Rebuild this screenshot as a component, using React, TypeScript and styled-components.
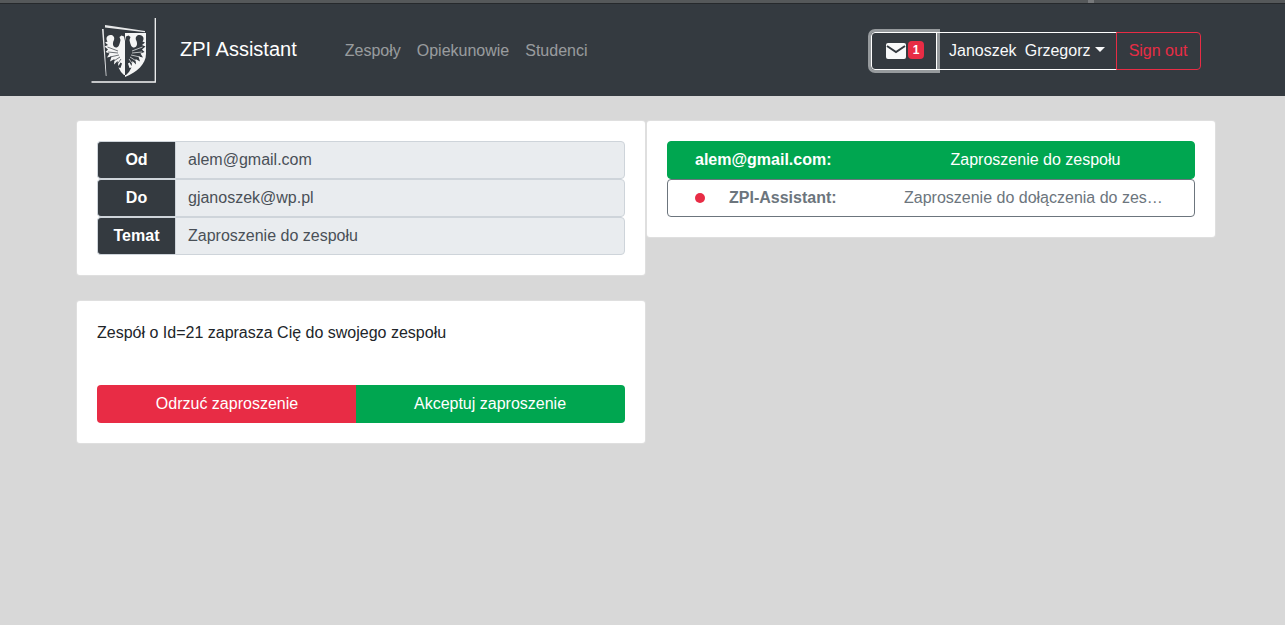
import React from "react";
import styled, { createGlobalStyle } from "styled-components";

const Global = createGlobalStyle`
  html, body { margin: 0; padding: 0; height: 100%; background: #d8d8d8; }
  body { font-family: "Liberation Sans", Arial, sans-serif; font-size: 16px; line-height: 24px; color: #212529; }
  * { box-sizing: border-box; }
`;

const Page = styled.div`
  min-height: 625px;
  overflow: hidden;
`;

const TopLine = styled.div`
  height: 4px;
  background: #55585a;
  border-bottom: 1px solid #26292c;
  position: relative;
`;

const TopNotch = styled.span`
  position: absolute;
  left: 1088px;
  top: 0;
  width: 6px;
  height: 3px;
  background: #77797b;
`;

const Navbar = styled.nav`
  height: 92px;
  background: #343a40;
  display: flex;
  align-items: center;
  padding: 0 84px 0 91px;
`;

const LogoBox = styled.div`
  width: 65px;
  height: 65px;
  margin-top: 1px;
  flex: none;
`;

const Brand = styled.span`
  margin: -2px 48px 0 24px;
  font-size: 20px;
  line-height: 30px;
  color: #fff;
`;

const NavLinks = styled.div`
  display: flex;
  gap: 16px;
  margin-top: 2px;
`;

const NavLink = styled.span`
  color: rgba(255, 255, 255, 0.5);
`;

const Actions = styled.div`
  margin: 2px 0 0 auto;
  display: flex;
  height: 38px;
`;

const MailButton = styled.div`
  width: 66px;
  border: 1px solid #fff;
  border-radius: 4px 0 0 4px;
  box-shadow: 0 0 0 3px rgba(248, 249, 250, 0.5);
  display: flex;
  align-items: center;
  justify-content: center;
  gap: 2px;
  padding-left: 2px;
  position: relative;
  z-index: 1;
`;

const Badge = styled.span`
  background: #e82c45;
  color: #fff;
  font-size: 12px;
  font-weight: 700;
  line-height: 12px;
  width: 16px;
  height: 18px;
  border-radius: 4px;
  display: flex;
  align-items: center;
  justify-content: center;
  margin-top: -2px;
`;

const UserButton = styled.div`
  width: 181px;
  margin-left: -1px;
  border: 1px solid #fff;
  border-left: none;
  color: #f8f9fa;
  display: flex;
  align-items: center;
  padding-left: 13px;
  white-space: pre;
  word-spacing: -0.4px;
`;

const Caret = styled.span`
  margin-left: 5px;
  border-top: 5px solid #f8f9fa;
  border-left: 5px solid transparent;
  border-right: 5px solid transparent;
  margin-top: -3px;
`;

const SignOut = styled.div`
  width: 85px;
  margin-left: -1px;
  border: 1px solid #e82c45;
  border-radius: 0 4px 4px 0;
  color: #e82c45;
  display: flex;
  align-items: center;
  justify-content: center;
  padding-right: 1px;
`;

const Content = styled.main`
  display: grid;
  grid-template-columns: 570px 570px;
  padding: 24px 0 0 76px;
  align-items: start;
`;

const Column = styled.div`
  display: flex;
  flex-direction: column;
  gap: 24px;
`;

const Card = styled.section`
  background: #fff;
  border: 1px solid rgba(0, 0, 0, 0.125);
  border-radius: 4px;
  padding: 20px;
`;

const InputRow = styled.div`
  display: flex;
  height: 38px;
`;

const InputLabel = styled.div`
  width: 78px;
  background: #343a40;
  color: #fff;
  font-weight: 700;
  border: 1px solid #ced4da;
  border-right: none;
  border-radius: 4px 0 0 4px;
  display: flex;
  align-items: center;
  justify-content: center;
`;

const InputValue = styled.div`
  flex: 1;
  background: #e9ecef;
  color: #495057;
  border: 1px solid #ced4da;
  border-radius: 0 4px 4px 0;
  padding-left: 12px;
  display: flex;
  align-items: center;
`;

const MessageText = styled.p`
  margin: 0 0 40px;
  height: 24px;
`;

const ButtonGroup = styled.div`
  display: flex;
  height: 38px;
`;

const ActionButton = styled.div<{ $tone: "red" | "green"; $w: number }>`
  width: ${(p) => p.$w}px;
  background: ${(p) => (p.$tone === "red" ? "#e82c45" : "#00a650")};
  color: #fff;
  display: flex;
  align-items: center;
  justify-content: center;
  border-radius: ${(p) => (p.$tone === "red" ? "4px 0 0 4px" : "0 4px 4px 0")};
  padding: ${(p) => (p.$tone === "red" ? "0 0 0 1px" : "0 1px 0 0")};
`;

const MailRow = styled.div<{ $active?: boolean }>`
  height: 38px;
  display: grid;
  align-items: center;
  border: 1px solid ${(p) => (p.$active ? "#00a650" : "#6c757d")};
  background: ${(p) => (p.$active ? "#00a650" : "#fff")};
  color: ${(p) => (p.$active ? "#fff" : "#6c757d")};
  border-radius: 4px;
  grid-template-columns: ${(p) => (p.$active ? "209px 1fr" : "34px 175px 1fr")};
  padding: 0 27px;
`;

const Dot = styled.span`
  width: 10px;
  height: 10px;
  border-radius: 50%;
  background: #e82c45;
`;

const Sender = styled.strong`
  font-weight: 700;
`;

const Subject = styled.span<{ $center?: boolean }>`
  text-align: ${(p) => (p.$center ? "center" : "left")};
  white-space: nowrap;
  overflow: hidden;
  text-overflow: ellipsis;
`;

const halfEagle =
  "M19.5 17C15.5 17 14.5 21 16.5 23.5L14 24.5L17 27L13.5 28.5L17 31.5L14.5 34L18.5 35.5L16 39.5L20.5 38.5L19 43.5L23.5 41L23 46.5L26.5 43L27.5 48L29.5 44.5L31 45.5L29.5 50L27.5 49.5L30 54L33 57H34V23L33 18.5L30.5 17.5L28.5 19L29.5 22C28.5 27 27.5 29.5 25 29.5C22 29.5 21 25.5 23 22C24 19 22 17 19.5 17Z";

const feathers = "M27 33L16.5 29M27 35L17 34M28 37L19 39M29 39L22 43.5M30 41L26 46.5";

const Logo = () => (
  <svg width="65" height="65" viewBox="0 0 65 65" fill="none">
    <path d="M0.5 64H64.3V0" stroke="#f4f5f5" strokeWidth="1.3" />
    <path d="M11 11L12.6 11L15.5 58L14.8 58Z" fill="#e8e9ea" />
    <path d="M14 7L54 13L54 14.2L14 9.5Z" fill="#e8e9ea" />
    <path d="M34 15H55V36C55 46 46 54 34 59Z" fill="#f4f5f5" />
    <path d={halfEagle} fill="#f4f5f5" />
    <path d={feathers} stroke="#343a40" strokeWidth="0.7" />
    <g transform="translate(68 0) scale(-1 1)">
      <path d={halfEagle} fill="#343a40" />
      <path d={feathers} stroke="#f4f5f5" strokeWidth="0.7" />
    </g>
  </svg>
);

const MailIcon = () => (
  <svg width="20" height="16" viewBox="0 0 20 16">
    <rect width="20" height="16" rx="2" fill="#f8f9fa" />
    <path d="M1 3L10 9L19 3" stroke="#343a40" strokeWidth="2" fill="none" />
  </svg>
);

export default function App() {
  return (
    <Page>
      <Global />
      <TopLine>
        <TopNotch />
      </TopLine>
      <Navbar>
        <LogoBox>
          <Logo />
        </LogoBox>
        <Brand>ZPI Assistant</Brand>
        <NavLinks>
          <NavLink>Zespoły</NavLink>
          <NavLink>Opiekunowie</NavLink>
          <NavLink>Studenci</NavLink>
        </NavLinks>
        <Actions>
          <MailButton>
            <MailIcon />
            <Badge>1</Badge>
          </MailButton>
          <UserButton>
            Janoszek{"  "}Grzegorz
            <Caret />
          </UserButton>
          <SignOut>Sign out</SignOut>
        </Actions>
      </Navbar>
      <Content>
        <Column>
          <Card>
            <InputRow>
              <InputLabel>Od</InputLabel>
              <InputValue>alem@gmail.com</InputValue>
            </InputRow>
            <InputRow>
              <InputLabel>Do</InputLabel>
              <InputValue>gjanoszek@wp.pl</InputValue>
            </InputRow>
            <InputRow>
              <InputLabel>Temat</InputLabel>
              <InputValue>Zaproszenie do zespołu</InputValue>
            </InputRow>
          </Card>
          <Card>
            <MessageText>Zespół o Id=21 zaprasza Cię do swojego zespołu</MessageText>
            <ButtonGroup>
              <ActionButton $tone="red" $w={259}>Odrzuć zaproszenie</ActionButton>
              <ActionButton $tone="green" $w={269}>Akceptuj zaproszenie</ActionButton>
            </ButtonGroup>
          </Card>
        </Column>
        <Column>
          <Card>
            <MailRow $active>
              <Sender>alem@gmail.com:</Sender>
              <Subject $center>Zaproszenie do zespołu</Subject>
            </MailRow>
            <MailRow>
              <Dot />
              <Sender>ZPI-Assistant:</Sender>
              <Subject>Zaproszenie do dołączenia do zespołu</Subject>
            </MailRow>
          </Card>
        </Column>
      </Content>
    </Page>
  );
}
